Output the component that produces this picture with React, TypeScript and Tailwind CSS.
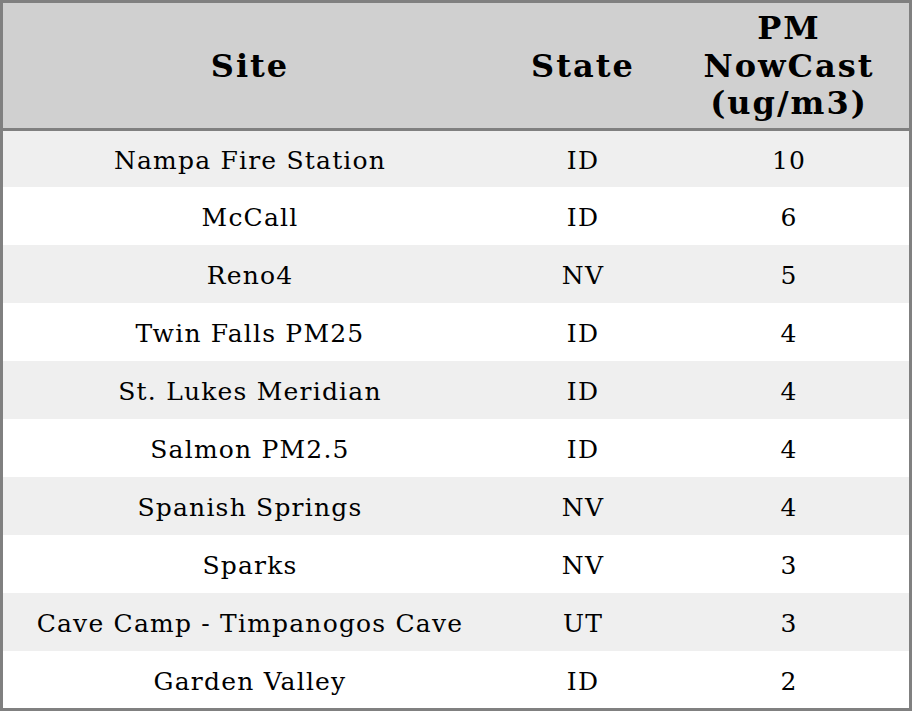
const ROWS: [string, string, string][] = [
  ['Nampa Fire Station', 'ID', '10'],
  ['McCall', 'ID', '6'],
  ['Reno4', 'NV', '5'],
  ['Twin Falls PM25', 'ID', '4'],
  ['St. Lukes Meridian', 'ID', '4'],
  ['Salmon PM2.5', 'ID', '4'],
  ['Spanish Springs', 'NV', '4'],
  ['Sparks', 'NV', '3'],
  ['Cave Camp - Timpanogos Cave', 'UT', '3'],
  ['Garden Valley', 'ID', '2'],
];

export default function App() {
  return (
    <div className="w-[912px] h-[711px] bg-white font-['DejaVu_Serif',serif] text-black">
      <div className="flex h-full flex-col border-[3px] border-[#808080]">
        <div className="flex h-[125px] shrink-0 items-center bg-[#d0d0d0] pt-[2px] text-[32px] font-bold leading-[37.5px] tracking-[2px]">
          <div className="w-[494px] text-center">Site</div>
          <div className="w-[172px] text-center">State</div>
          <div className="flex-1 text-center">
            PM
            <br />
            NowCast
            <br />
            (ug/m3)
          </div>
        </div>
        <div className="h-[3px] shrink-0 bg-[#808080]" />
        <div className="flex flex-1 flex-col text-[25px] tracking-[1.2px]">
          {ROWS.map(([site, state, pm], i) => (
            <div
              key={site}
              className={`flex items-center pt-1 ${i === 0 ? 'h-[56px]' : i === ROWS.length - 1 ? 'flex-1' : 'h-[58px]'} ${i % 2 === 0 ? 'bg-[#efefef]' : 'bg-white'}`}
            >
              <div className="w-[494px] text-center">{site}</div>
              <div className="w-[172px] text-center">{state}</div>
              <div className="flex-1 text-center">{pm}</div>
            </div>
          ))}
        </div>
      </div>
    </div>
  );
}
